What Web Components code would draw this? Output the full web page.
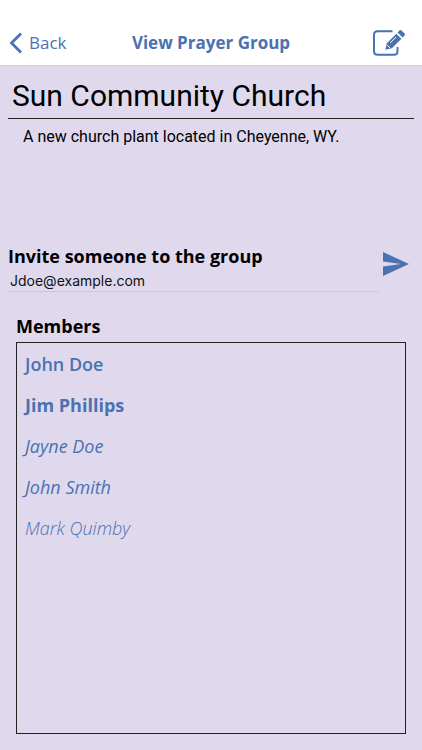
<!DOCTYPE html>
<html lang="en">
<head>
  <meta charset="utf-8">
  <meta name="viewport" content="width=device-width, initial-scale=1">
  <title>View Prayer Group</title>
  <style>
    :root {
      --color-accent: #4a72b0;
      --color-surface: #e0d9ee;
      --font-ui: "Open Sans", sans-serif;
      --font-display: Roboto, sans-serif;
      --font-system: Inter, sans-serif;
    }
    body {
      margin: 0;
      font-family: var(--font-ui);
      color: #000;
    }
  </style>
</head>
<body>
  <prayer-group-page>
    <nav-bar slot="header" heading="View Prayer Group"></nav-bar>
    <group-summary>
      <span slot="name">Sun Community Church</span>
      <span slot="description">A new church plant located in Cheyenne, WY.</span>
    </group-summary>
    <invite-form value="Jdoe@example.com">Invite someone to the group</invite-form>
    <member-list heading="Members">
      <member-item role-type="member">John Doe</member-item>
      <member-item role-type="leader">Jim Phillips</member-item>
      <member-item role-type="invited">Jayne Doe</member-item>
      <member-item role-type="invited">John Smith</member-item>
      <member-item role-type="pending">Mark Quimby</member-item>
    </member-list>
  </prayer-group-page>

  <script>
    class PrayerGroupPage extends HTMLElement {
      constructor() {
        super();
        this.attachShadow({ mode: 'open' });
        this.shadowRoot.innerHTML = `
          <style>
            :host {
              display: flex;
              flex-direction: column;
              min-height: 100vh;
            }
            main {
              flex: 1;
              display: flex;
              flex-direction: column;
              box-sizing: border-box;
              padding: 8px 8px 16px;
              background: var(--color-surface);
            }
          </style>
          <slot name="header"></slot>
          <main><slot></slot></main>
        `;
      }
    }

    class NavBar extends HTMLElement {
      constructor() {
        super();
        this.attachShadow({ mode: 'open' });
        this.shadowRoot.innerHTML = `
          <style>
            :host {
              display: block;
              padding-top: 20px;
              background: white;
              border-bottom: 1px solid #d5d0de;
            }
            header {
              display: grid;
              grid-template-columns: 1fr auto 1fr;
              align-items: center;
              height: 45px;
              padding: 0 16px 0 8px;
              color: var(--color-accent);
            }
            a {
              display: flex;
              align-items: center;
              gap: 6px;
              color: inherit;
              font-size: 17px;
              text-decoration: none;
            }
            h1 {
              margin: 0;
              padding-left: 8px;
              font-size: 17px;
              font-weight: 700;
              white-space: nowrap;
            }
            button {
              justify-self: end;
              padding: 0;
              border: none;
              background: none;
              color: inherit;
            }
            svg { display: block; }
          </style>
          <header>
            <a href="#">
              <svg width="15" height="22" viewBox="0 0 15 22" aria-hidden="true">
                <path d="M13 1.5 3.5 11 13 20.5" fill="none" stroke="currentColor" stroke-width="2.8"/>
              </svg>
              <span>Back</span>
            </a>
            <h1></h1>
            <button type="button" aria-label="Edit group">
              <svg width="34" height="28" viewBox="0 0 34 28" aria-hidden="true">
                <path d="M20.500 2.200H5.500Q2 2.200 2 5.700V22.300Q2 25.800 5.500 25.800H22Q25.500 25.800 25.500 22.300V18" fill="none" stroke="currentColor" stroke-width="2"/>
                <path d="M13.300 20.800 14.800 14.200 24.300 4.700 29.400 9.800 19.900 19.300Z" fill="currentColor"/>
                <path d="M25.500 3.500 27.500 1.500Q28.500.7 29.500 1.500L32.600 4.600Q33.400 5.600 32.600 6.600L30.600 8.600Z" fill="currentColor"/>
                <path d="M18.200 13.900 24 8.100M15.200 16.100 18 18.900" fill="none" stroke="white" stroke-width="1"/>
              </svg>
            </button>
          </header>
        `;
      }

      connectedCallback() {
        this.shadowRoot.querySelector('h1').textContent = this.getAttribute('heading');
      }
    }

    class GroupSummary extends HTMLElement {
      constructor() {
        super();
        this.attachShadow({ mode: 'open' });
        this.shadowRoot.innerHTML = `
          <style>
            :host {
              display: block;
              min-height: 168px;
            }
            h2 {
              margin: 0;
              padding: 0 4px;
              border-bottom: 1px solid #222;
              font-family: var(--font-display);
              font-size: 30px;
              font-weight: 400;
              line-height: 44px;
            }
            p {
              margin: 0;
              padding: 8px 15px;
              font-family: var(--font-display);
              font-size: 16px;
              line-height: 20px;
            }
          </style>
          <h2><slot name="name"></slot></h2>
          <p><slot name="description"></slot></p>
        `;
      }
    }

    class InviteForm extends HTMLElement {
      constructor() {
        super();
        this.attachShadow({ mode: 'open' });
        this.shadowRoot.innerHTML = `
          <style>
            :host { display: block; }
            form {
              display: flex;
              align-items: center;
              gap: 3px;
            }
            .field {
              flex: 1;
              min-width: 0;
            }
            label {
              display: block;
              font-size: 18px;
              font-weight: 700;
              line-height: 28px;
            }
            input {
              display: block;
              box-sizing: border-box;
              width: 100%;
              height: 22px;
              padding: 0 2px;
              border: none;
              border-bottom: 1px solid #ccc6d6;
              background: none;
              color: #111;
              font-family: var(--font-system);
              font-size: 14px;
            }
            button {
              padding: 0 4px 6px 0;
              border: none;
              background: none;
              color: var(--color-accent);
            }
            svg { display: block; }
          </style>
          <form>
            <div class="field">
              <label for="email"><slot></slot></label>
              <input id="email" type="email">
            </div>
            <button type="submit" aria-label="Send invitation">
              <svg width="28" height="26" viewBox="0 0 28 26" aria-hidden="true">
                <path d="M1 1 27 13 1 25V15.500L19 13 1 10.500Z" fill="currentColor"/>
              </svg>
            </button>
          </form>
        `;
      }

      connectedCallback() {
        this.shadowRoot.querySelector('input').value = this.getAttribute('value');
        this.shadowRoot.querySelector('form').addEventListener('submit', event => {
          event.preventDefault();
        });
      }
    }

    class MemberList extends HTMLElement {
      constructor() {
        super();
        this.attachShadow({ mode: 'open' });
        this.shadowRoot.innerHTML = `
          <style>
            :host {
              flex: 1;
              display: flex;
              flex-direction: column;
              padding: 18px 8px 0;
            }
            h3 {
              margin: 0;
              font-size: 18px;
              font-weight: 700;
              line-height: 32px;
            }
            .list {
              flex: 1;
              padding-top: 1px;
              border: 1px solid #222;
            }
          </style>
          <h3></h3>
          <div class="list" role="list"><slot></slot></div>
        `;
      }

      connectedCallback() {
        this.shadowRoot.querySelector('h3').textContent = this.getAttribute('heading');
      }
    }

    class MemberItem extends HTMLElement {
      constructor() {
        super();
        this.attachShadow({ mode: 'open' });
        this.shadowRoot.innerHTML = `
          <style>
            :host {
              display: block;
              padding: 0 8px;
              color: var(--color-accent);
              font-size: 18px;
              line-height: 41px;
            }
            :host([role-type="member"]) { font-weight: 600; }
            :host([role-type="leader"]) { font-weight: 700; }
            :host([role-type="invited"]) { font-style: italic; }
            :host([role-type="pending"]) {
              font-style: italic;
              font-weight: 300;
            }
          </style>
          <slot></slot>
        `;
      }

      connectedCallback() {
        this.setAttribute('role', 'listitem');
      }
    }

    customElements.define('prayer-group-page', PrayerGroupPage);
    customElements.define('nav-bar', NavBar);
    customElements.define('group-summary', GroupSummary);
    customElements.define('invite-form', InviteForm);
    customElements.define('member-list', MemberList);
    customElements.define('member-item', MemberItem);
  </script>
</body>
</html>
